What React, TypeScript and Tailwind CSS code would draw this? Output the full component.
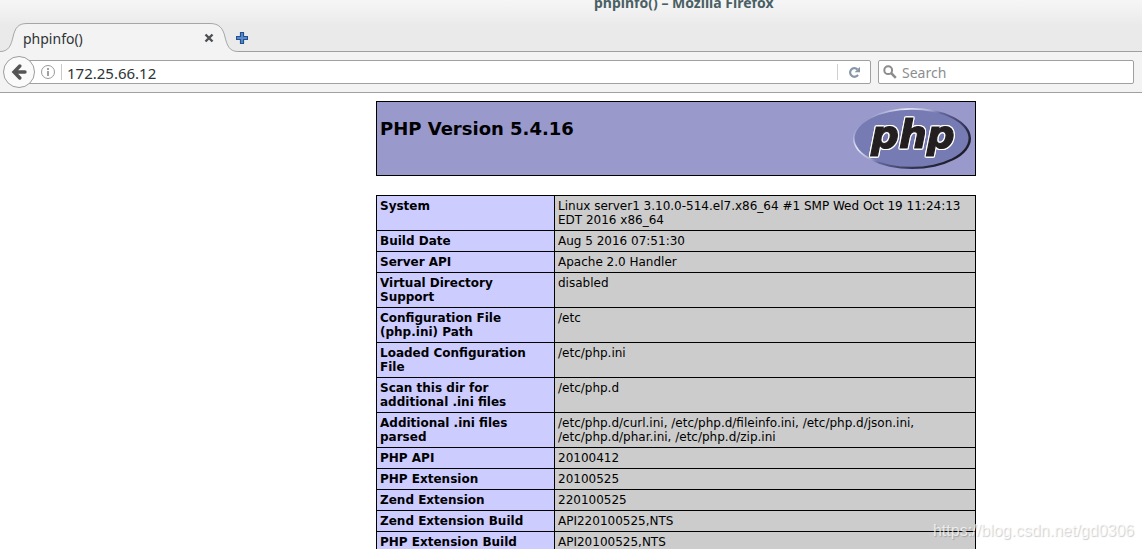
type InfoRow = {
  label: string;
  value: string;
};

const infoRows: InfoRow[] = [
  {
    label: "System",
    value:
      "Linux server1 3.10.0-514.el7.x86_64 #1 SMP Wed Oct 19 11:24:13 EDT 2016 x86_64",
  },
  { label: "Build Date", value: "Aug 5 2016 07:51:30" },
  { label: "Server API", value: "Apache 2.0 Handler" },
  { label: "Virtual Directory Support", value: "disabled" },
  { label: "Configuration File (php.ini) Path", value: "/etc" },
  { label: "Loaded Configuration File", value: "/etc/php.ini" },
  { label: "Scan this dir for additional .ini files", value: "/etc/php.d" },
  {
    label: "Additional .ini files parsed",
    value:
      "/etc/php.d/curl.ini, /etc/php.d/fileinfo.ini, /etc/php.d/json.ini, /etc/php.d/phar.ini, /etc/php.d/zip.ini",
  },
  { label: "PHP API", value: "20100412" },
  { label: "PHP Extension", value: "20100525" },
  { label: "Zend Extension", value: "220100525" },
  { label: "Zend Extension Build", value: "API220100525,NTS" },
  { label: "PHP Extension Build", value: "API20100525,NTS" },
];

function PhpLogo() {
  return (
    <svg width="120" height="67" viewBox="0 0 120 67" role="img" aria-label="PHP logo" className="shrink-0">
      <defs>
        <linearGradient id="rim" x1="0" y1="0.1" x2="1" y2="0.75">
          <stop offset="0" stopColor="#8083ba" />
          <stop offset="0.12" stopColor="#9598c8" />
          <stop offset="0.28" stopColor="#e6e8f5" />
          <stop offset="0.42" stopColor="#b0b3d6" />
          <stop offset="0.52" stopColor="#62659a" />
          <stop offset="0.8" stopColor="#2c2c46" />
          <stop offset="1" stopColor="#18181f" />
        </linearGradient>
      </defs>
      <ellipse cx="60" cy="33.5" rx="59" ry="30.5" fill="url(#rim)" />
      <ellipse cx="59.5" cy="33.3" rx="57" ry="28.5" fill="#777bb4" />
      <text
        x="19"
        y="43"
        fontSize="39"
        fontWeight="bold"
        fontStyle="italic"
        fontFamily="'DejaVu Sans', sans-serif"
        fill="#231f20"
        stroke="#231f20"
        strokeWidth="1.2"
        className="[filter:drop-shadow(1px_0_0_#fff)_drop-shadow(-1px_0_0_#fff)_drop-shadow(0_1px_0_#fff)_drop-shadow(0_-1px_0_#fff)]"
      >
        php
      </text>
    </svg>
  );
}

function TabStrip() {
  return (
    <div className="flex h-[29px]">
      <div className="relative flex w-[238px] shrink-0 items-center pr-[23px] pl-[23px]">
        <svg
          aria-hidden="true"
          width="238"
          height="29"
          viewBox="0 0 238 29"
          className="absolute inset-0"
        >
          <path
            d="M0 28.5C9 28.5 11 22 13 14C15 5 18 .5 27 .5H210C219 .5 223 5 225 14C227 22 229 28.5 238 28.5V29H0Z"
            fill="#f3f3f3"
          />
          <path
            d="M0 28.5C9 28.5 11 22 13 14C15 5 18 .5 27 .5H210C219 .5 223 5 225 14C227 22 229 28.5 238 28.5"
            fill="none"
            stroke="#a3a7a9"
          />
        </svg>
        <span className="relative flex-1 pt-0.5 text-sm leading-5 text-[#2e3436]">phpinfo()</span>
        <button type="button" aria-label="Close tab" className="relative">
          <svg width="12" height="12" viewBox="0 0 12 12">
            <path d="M2.5 2.5L9.5 9.5M9.5 2.5L2.5 9.5" stroke="#4c5052" strokeWidth="2.4" />
          </svg>
        </button>
      </div>
      <div className="flex flex-1 items-center border-b border-[#a0a0a0] pt-0.5">
        <button type="button" aria-label="New tab" className="-ml-0.5">
          <svg width="12" height="12" viewBox="0 0 12 12">
            <path
              d="M4.5 .5h3v4h4v3h-4v4h-3v-4h-4v-3h4z"
              fill="#5a8ccb"
              stroke="#234f92"
              strokeWidth="1.2"
              strokeLinejoin="round"
            />
          </svg>
        </button>
      </div>
    </div>
  );
}

function NavBar() {
  return (
    <div className="flex h-[41px] items-center border-b border-[#a0a0a0] bg-[#f3f3f3] pr-2 pl-[3px]">
      <button
        type="button"
        aria-label="Back"
        className="z-10 flex size-8 shrink-0 items-center justify-center rounded-full border border-[#9c9c9c] bg-[#fafafa]"
      >
        <svg width="16" height="16" viewBox="0 0 16 16" fill="none">
          <path d="M8.8 2L3 8L8.8 14M3.4 8H14" stroke="#555555" strokeWidth="3.4" strokeLinecap="round" />
        </svg>
      </button>
      <div className="-ml-2 flex h-6 flex-1 items-center rounded-r-xs border border-[#a0a0a0] bg-white pl-3">
        <svg width="16" height="16" viewBox="0 0 16 16" fill="none" aria-hidden="true">
          <circle cx="8" cy="8" r="6.5" stroke="#9a9a9a" />
          <path d="M8 4v2M8 7v5" stroke="#8a8a8a" strokeWidth="1.6" />
        </svg>
        <span className="ml-[5px] h-4 w-px bg-[#c8c8c8]" />
        <input
          type="text"
          aria-label="Address"
          defaultValue="172.25.66.12"
          className="ml-[5px] min-w-0 flex-1 pt-0.5 text-[15px] leading-5 text-[#2e3436] outline-none"
        />
        <span className="h-4 w-px bg-[#d0d0d0]" />
        <button type="button" aria-label="Reload" className="flex w-8 justify-center">
          <svg width="13" height="13" viewBox="0 0 13 13" fill="none">
            <path d="M9.4 3.4A4.3 4.3 0 1 0 10 8.8" stroke="#8797a8" strokeWidth="2.2" />
            <path d="M12 .8V6.2H6.6Z" fill="#8797a8" />
          </svg>
        </button>
      </div>
      <div className="ml-[7px] flex h-6 w-64 items-center rounded-xs border border-[#a0a0a0] bg-white pl-1">
        <svg width="14" height="14" viewBox="0 0 14 14" fill="none" aria-hidden="true">
          <circle cx="5.2" cy="5.2" r="3.9" stroke="#8c8c8c" strokeWidth="2" />
          <path d="M8.2 8.2L12.8 12.8" stroke="#8c8c8c" strokeWidth="2.6" />
        </svg>
        <input
          type="text"
          aria-label="Search"
          placeholder="Search"
          className="ml-[5px] min-w-0 flex-1 pt-0.5 text-sm leading-5 text-[#2e3436] outline-none placeholder:text-[#8b8e8f]"
        />
      </div>
    </div>
  );
}

function PhpInfo() {
  return (
    <main className="w-[600px] font-['DejaVu_Sans',sans-serif] text-black">
      <div className="flex items-start justify-between border border-black bg-[#9999cc] p-[3px]">
        <h1 className="pt-3 text-lg leading-6 font-bold">PHP Version 5.4.16</h1>
        <PhpLogo />
      </div>
      <table className="mt-[19px] w-full table-fixed border-collapse text-xs leading-[14px]">
        <colgroup>
          <col className="w-[178px]" />
          <col />
        </colgroup>
        <tbody>
          {infoRows.map((row) => (
            <tr key={row.label} className="align-top">
              <th scope="row" className="border border-black bg-[#ccccff] p-[3px] text-left font-bold">
                {row.label}
              </th>
              <td className="border border-black bg-[#cccccc] p-[3px]">{row.value}</td>
            </tr>
          ))}
        </tbody>
      </table>
    </main>
  );
}

export default function App() {
  return (
    <div className="relative h-screen overflow-hidden bg-white font-['Noto_Sans','Open_Sans',sans-serif]">
      <header>
        <div className="bg-linear-to-b from-[#f6f6f6] to-[#eaeaea] to-50%">
          <div className="h-[23px] pl-[594px] text-sm leading-[6px] font-bold whitespace-nowrap text-[#4a6064]">
            phpinfo() – Mozilla Firefox
          </div>
          <TabStrip />
        </div>
        <NavBar />
      </header>
      <div className="pt-2 pl-[376px]">
        <PhpInfo />
      </div>
      <div className="absolute right-2 bottom-2 font-['Liberation_Sans',sans-serif] text-base leading-5 text-white/70 [text-shadow:1px_1px_1px_rgba(0,0,0,0.2)]">
        https://blog.csdn.net/gd0306
      </div>
    </div>
  );
}
